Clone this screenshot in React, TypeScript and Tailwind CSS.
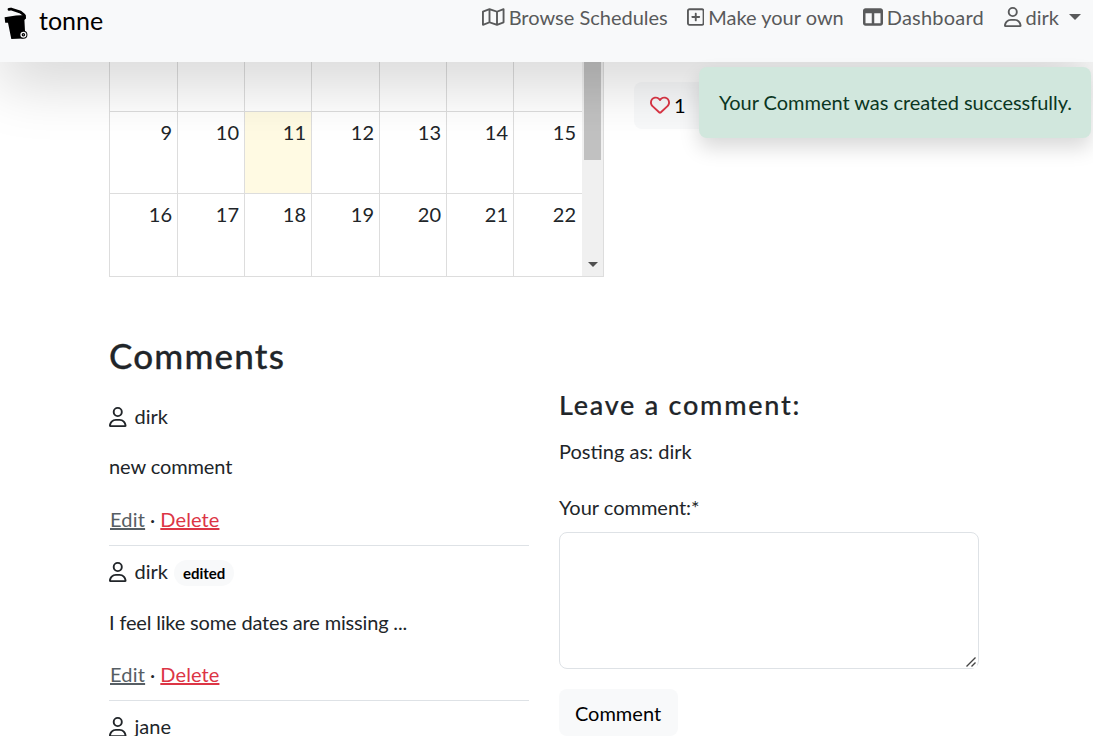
import type { ReactNode } from 'react';
import { FaRegHeart, FaRegMap, FaRegSquarePlus, FaRegUser, FaTableColumns } from 'react-icons/fa6';

const weeks = [
  [9, 10, 11, 12, 13, 14, 15],
  [16, 17, 18, 19, 20, 21, 22],
];

function BinLogo() {
  return (
    <svg viewBox="0 0 24 34" className="h-[34px] w-6 shrink-0" aria-hidden="true">
      <path d="M5 3.4L7 3l9.5 3.2 3.6 2.8.4 3" fill="none" stroke="#000" strokeWidth="2.8" strokeLinecap="round" strokeLinejoin="round" />
      <path d="M.6 11.2L12 9.6l9.6-.6.2 3.2-1.4 1.6.6 11.4-2 7.4L7.3 33 4 16.8H1.2z" fill="#000" />
      <circle cx="19.4" cy="28.7" r="4" fill="#000" />
      <circle cx="19.4" cy="28.7" r="2.4" fill="#000" stroke="#f8f9fa" strokeWidth="1.3" />
      <circle cx="19.4" cy="28.7" r="0.5" fill="#f8f9fa" />
    </svg>
  );
}

function ResizeGrip() {
  return (
    <svg viewBox="0 0 12 12" className="absolute right-[2px] bottom-[1px] h-3 w-3 bg-white" aria-hidden="true">
      <path d="M1.5 10.5l9-9M6.5 10.5l4-4" stroke="#444" strokeWidth="1.4" />
    </svg>
  );
}

function NavLink({ icon, children }: { icon: ReactNode; children: ReactNode }) {
  return (
    <a className="flex h-[30px] items-center gap-1 text-[#595a5b]">
      {icon}
      <span>{children}</span>
    </a>
  );
}

function Author({ name, edited = false }: { name: string; edited?: boolean }) {
  return (
    <div className="flex h-[30px] items-center">
      <FaRegUser className="mt-px h-5 w-[17.5px]" />
      <span className="ml-2">{name}</span>
      {edited && (
        <span className="mt-1 ml-[6px] flex h-[26px] items-center rounded-full bg-[#f8f9fa] px-[9px] text-[15px] font-bold text-black">
          edited
        </span>
      )}
    </div>
  );
}

function Comment({ name, children, edited }: { name: string; children: ReactNode; edited?: boolean }) {
  return (
    <article className="flex h-[155px] flex-col border-b border-[#dee2e6] pt-[10px] pb-[11px]">
      <Author name={name} edited={edited} />
      {children}
      <div className="mt-auto flex">
        <a className="ml-px tracking-[0.2px] text-[#565e64] underline decoration-[#565e64]">Edit</a>
        <span className="mr-[5px] ml-[5px]">·</span>
        <a className="tracking-[0.1px] text-[#dc3545] underline">Delete</a>
      </div>
    </article>
  );
}

export default function App() {
  return (
    <div className="relative h-[736px] w-full overflow-hidden bg-white font-['Lato',sans-serif] text-[20px] leading-[30px] text-[#212529]">
      <header className="relative z-10 flex h-[62px] items-start justify-between bg-[#f8f9fa] pr-3 pl-1 shadow-[0_20px_60px_rgba(0,0,0,0.175)]">
        <div className="flex items-start pt-[6px]">
          <BinLogo />
          <span className="-mt-[1px] ml-[11px] text-[25px] text-black">tonne</span>
        </div>
        <nav className="flex pt-[2px]">
          <NavLink icon={<FaRegMap className="h-5 w-[22.5px]" />}>Browse Schedules</NavLink>
          <div className="ml-[19px]">
            <NavLink icon={<FaRegSquarePlus className="h-5 w-[17.5px]" />}>Make your own</NavLink>
          </div>
          <div className="mr-5 ml-[19px]">
            <NavLink icon={<FaTableColumns className="h-5 w-5" />}>
              <span className="tracking-[0.22px]">Dashboard</span>
            </NavLink>
          </div>
          <div className="flex items-center">
            <NavLink icon={<FaRegUser className="h-5 w-[17.5px]" />}>dirk</NavLink>
            <span className="ml-[10px] border-x-[6px] border-t-[6px] border-x-transparent border-t-[#595a5b]" />
          </div>
        </nav>
      </header>

      <div role="status" className="absolute top-[67px] left-[699px] z-20 h-[71px] w-[392px] rounded-lg bg-[#d1e7dd] px-5 py-5 tracking-[-0.03px] whitespace-nowrap text-[#0a3622] shadow-[0_10px_20px_rgba(0,0,0,0.15)]">
        Your Comment was created successfully.
      </div>

      <main className="pl-[109px]">
        <div className="flex gap-[30px]">
          <div className="flex h-[215px] w-[495px] border-x border-b border-[#dddddd]">
            <div className="flex w-[472px] flex-col">
              <div className="grid h-[49px] grid-cols-[68px_67px_67px_68px_67px_67px_67px]">
                {weeks[0].map((d, i) => (
                  <div key={d} className={i < 6 ? 'border-r border-[#dddddd]' : ''} />
                ))}
              </div>
              {weeks.map((week) => (
                <div key={week[0]} className="grid h-[82px] grid-cols-[68px_67px_67px_68px_67px_67px_67px] border-t border-[#dddddd] last:h-[83px]">
                  {week.map((d, i) => (
                    <div
                      key={d}
                      className={`pt-[5px] pr-[5px] text-right ${i < 6 ? 'border-r border-[#dddddd]' : ''} ${d === 11 ? 'bg-[#fffae3]' : ''}`}
                    >
                      {d}
                    </div>
                  ))}
                </div>
              ))}
            </div>
            <div className="flex flex-1 flex-col items-center justify-between bg-[#f0f0f0]">
              <div className="h-[98px] w-[17px] bg-[#c1c1c1]" />
              <span className="mb-[9px] border-x-[5px] border-t-[5px] border-x-transparent border-t-[#505050]" />
            </div>
          </div>
          <button className="mt-5 flex h-[47px] w-[80px] items-center gap-[5px] rounded-lg bg-[#f8f9fa] pb-px pl-4 text-black">
            <FaRegHeart className="h-5 w-5 text-[#dc3545]" />
            <span className="-mt-px -ml-px">1</span>
          </button>
        </div>

        <div className="flex gap-[30px]">
          <section className="w-[420px]">
            <h2 className="mt-[54px] h-[60px] text-[35px] leading-[48px] font-medium tracking-[1.2px] [-webkit-text-stroke:0.3px_#212529]">Comments</h2>
            <Comment name="dirk">
              <p className="mt-5 tracking-[-0.1px]">new comment</p>
            </Comment>
            <Comment name="dirk" edited>
              <p className="mt-[21px] tracking-[-0.17px]">I feel like some dates are missing ...</p>
            </Comment>
            <div className="pt-[10px]">
              <Author name="jane" />
            </div>
          </section>
          <section className="w-[420px]">
            <h3 className="mt-[110px] h-[49px] text-[27px] leading-[36px] font-medium tracking-[1.75px] [-webkit-text-stroke:0.2px_#212529]">Leave a comment:</h3>
            <p>Posting as: dirk</p>
            <label className="mt-[26px] block">Your comment:*</label>
            <div className="relative mt-[10px]">
              <textarea className="block h-[137px] w-full resize-none rounded-lg border border-[#dee2e6] bg-white" />
              <ResizeGrip />
            </div>
            <button className="mt-5 h-[47px] w-[119px] rounded-lg bg-[#f8f9fa] pr-[1px] text-black">Comment</button>
          </section>
        </div>
      </main>
    </div>
  );
}
